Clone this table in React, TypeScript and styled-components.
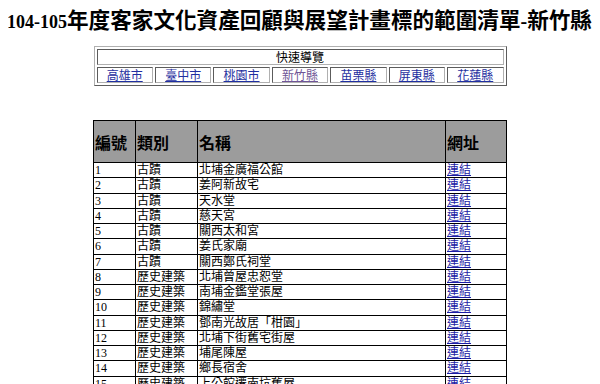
import React from "react";
import styled, { createGlobalStyle } from "styled-components";

const GlobalStyle = createGlobalStyle`
    body {
        margin: 8px;
        background: #ffffff;
        color: #000000;
        font-family: "Liberation Serif", "Noto Sans CJK TC", serif;
    }
`;

const Title = styled.h1`
    margin: 0 0 0 -1px;
    font-size: 21.6px;
    line-height: 26px;
    font-weight: bold;
    white-space: nowrap;
    font-family: "Liberation Serif", "Noto Sans CJK TC", serif;
`;

const Latin = styled.span`
    font-size: 18px;
`;

const Dash = styled.span`
    font-size: 20px;
`;

const NavTable = styled.table`
    margin: 11px auto 0;
    width: 413px;
    border: 1px outset #b0b0b0;
    border-spacing: 2px;
    table-layout: fixed;
    font-size: 12px;
    font-family: "Noto Sans CJK TC", sans-serif;
`;

const NavCell = styled.td`
    border: 1px inset #b0b0b0;
    padding: 0;
    line-height: 14px;
    height: 14px;
    text-align: center;
`;

const NavLink = styled.a<{ $visited?: boolean }>`
    color: ${(p) => (p.$visited ? "#6f5596" : "#1f2fa0")};
    text-decoration: underline;
`;

const ListTable = styled.table`
    margin: 34px auto 0;
    width: 413px;
    border-collapse: collapse;
    table-layout: fixed;
    border: 1px solid #000;
    font-size: 12px;
    font-family: "Liberation Serif", "Noto Sans CJK TC", serif;
`;

const HeadCell = styled.th`
    background: #9c9c9c;
    border: 1px solid #000;
    height: 41px;
    padding: 0 1px;
    text-align: left;
    vertical-align: middle;
    font-size: 16px;
    font-weight: bold;
    font-family: "Noto Sans CJK TC", sans-serif;
`;

const Cell = styled.td`
    border: 1px solid #000;
    padding: 0 1px;
    height: 14.25px;
    line-height: 14.25px;
    white-space: nowrap;
    overflow: hidden;
`;

const RowLink = styled.a`
    color: #1c1ca4;
    text-decoration: underline;
`;

const cities = [
    { name: "高雄市" },
    { name: "臺中市" },
    { name: "桃園市" },
    { name: "新竹縣", visited: true },
    { name: "苗栗縣" },
    { name: "屏東縣" },
    { name: "花蓮縣" },
];

const sites: [string, string][] = [
    ["古蹟", "北埔金廣福公館"],
    ["古蹟", "姜阿新故宅"],
    ["古蹟", "天水堂"],
    ["古蹟", "慈天宮"],
    ["古蹟", "關西太和宮"],
    ["古蹟", "姜氏家廟"],
    ["古蹟", "關西鄭氏祠堂"],
    ["歷史建築", "北埔曾屋忠恕堂"],
    ["歷史建築", "南埔金鑑堂張屋"],
    ["歷史建築", "錦繡堂"],
    ["歷史建築", "鄧南光故居「柑園」"],
    ["歷史建築", "北埔下街舊宅街屋"],
    ["歷史建築", "埔尾陳屋"],
    ["歷史建築", "鄉長宿舍"],
    ["歷史建築", "上公館遷南坑舊屋"],
    ["歷史建築", "新埔上枋寮劉宅"],
];

export default function App() {
    return (
        <>
            <GlobalStyle />
            <Title>
                <Latin>104-105</Latin>年度客家文化資產回顧與展望計畫標的範圍清單
                <Dash>-</Dash>新竹縣
            </Title>

            <NavTable>
                <tbody>
                    <tr>
                        <NavCell colSpan={7}>快速導覽</NavCell>
                    </tr>
                    <tr>
                        {cities.map((c) => (
                            <NavCell key={c.name}>
                                <NavLink href="#" $visited={c.visited}>
                                    {c.name}
                                </NavLink>
                            </NavCell>
                        ))}
                    </tr>
                </tbody>
            </NavTable>

            <ListTable>
                <colgroup>
                    <col style={{ width: 42 }} />
                    <col style={{ width: 62 }} />
                    <col style={{ width: 248 }} />
                    <col style={{ width: 61 }} />
                </colgroup>
                <thead>
                    <tr>
                        <HeadCell>編號</HeadCell>
                        <HeadCell>類別</HeadCell>
                        <HeadCell>名稱</HeadCell>
                        <HeadCell>網址</HeadCell>
                    </tr>
                </thead>
                <tbody>
                    {sites.map(([kind, name], i) => (
                        <tr key={i}>
                            <Cell>{i + 1}</Cell>
                            <Cell>{kind}</Cell>
                            <Cell>{name}</Cell>
                            <Cell>
                                <RowLink href="#">連結</RowLink>
                            </Cell>
                        </tr>
                    ))}
                </tbody>
            </ListTable>
        </>
    );
}
